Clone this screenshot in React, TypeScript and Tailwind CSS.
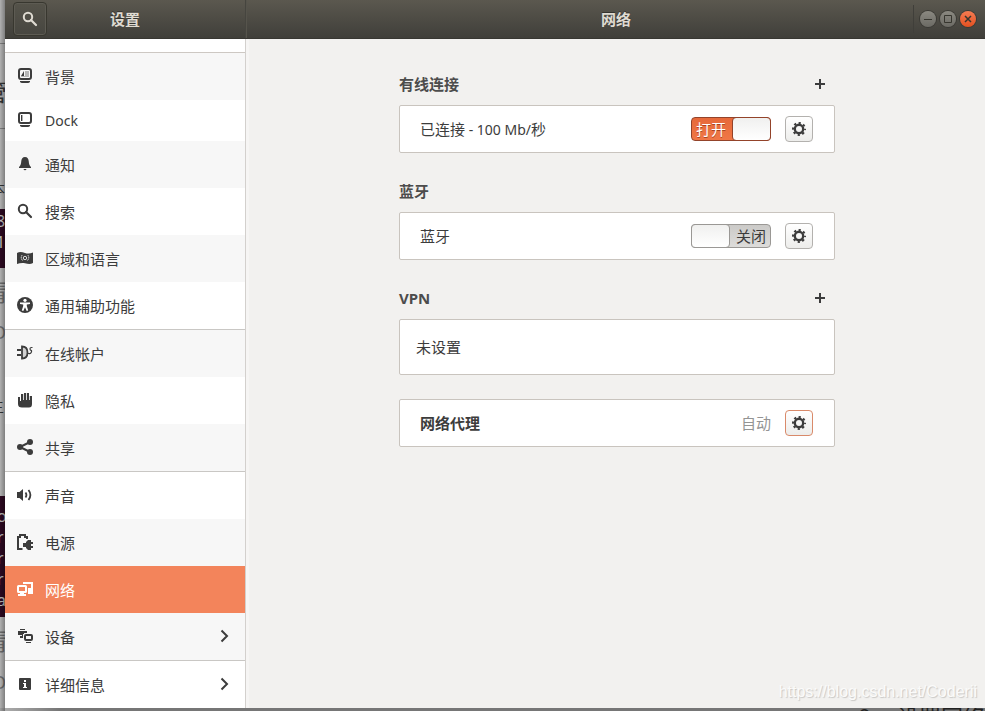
import React, { useState } from 'react';

type IconName =
  | 'background'
  | 'dock'
  | 'bell'
  | 'search'
  | 'region'
  | 'access'
  | 'accounts'
  | 'privacy'
  | 'share'
  | 'sound'
  | 'power'
  | 'network'
  | 'devices'
  | 'info';

interface NavItem {
  icon: IconName;
  label: string;
  className: string;
  active?: boolean;
  more?: boolean;
}

const navItems: NavItem[] = [
  { icon: 'background', label: '背景', className: 'h-[47px] bg-[#f7f7f7]' },
  { icon: 'dock', label: 'Dock', className: 'h-[41px] bg-white text-sm' },
  { icon: 'bell', label: '通知', className: 'h-[47px] bg-[#f7f7f7]' },
  { icon: 'search', label: '搜索', className: 'h-[47px] bg-white' },
  { icon: 'region', label: '区域和语言', className: 'h-[47px] bg-[#f7f7f7]' },
  { icon: 'access', label: '通用辅助功能', className: 'h-[47px] bg-white' },
  { icon: 'accounts', label: '在线帐户', className: 'h-12 border-t border-[#c9c7c4] bg-[#f7f7f7]' },
  { icon: 'privacy', label: '隐私', className: 'h-[47px] bg-white' },
  { icon: 'share', label: '共享', className: 'h-[47px] bg-[#f7f7f7]' },
  { icon: 'sound', label: '声音', className: 'h-12 border-t border-[#c9c7c4] bg-white' },
  { icon: 'power', label: '电源', className: 'h-[47px] bg-[#f7f7f7]' },
  { icon: 'network', label: '网络', className: 'h-[47px] bg-[#f3845b] text-white', active: true },
  { icon: 'devices', label: '设备', className: 'h-[47px] bg-[#f7f7f7]', more: true },
  { icon: 'info', label: '详细信息', className: 'h-12 border-t border-[#c9c7c4] bg-white', more: true },
];

const icons: Record<IconName, React.ReactNode> = {
  background: (
    <>
      <rect x="2" y="1" width="12" height="10" rx="2" fill="none" stroke="currentColor" strokeWidth="2" />
      <path d="M4 8h3V3Z" />
      <path d="M8 3h4v6H4V8h4Z" opacity=".35" />
      <path d="M3 13h10v1q-1 1-2 1H5q-1 0-2-1Z" />
    </>
  ),
  dock: (
    <>
      <rect x="2" y="1" width="12" height="10" rx="2" fill="none" stroke="currentColor" strokeWidth="2" />
      <path d="M4 3h1v6H4Z" />
      <path d="M5 3h1v6H5Z" opacity=".4" />
      <path d="M3 13h10v1q-1 1-2 1H5q-1 0-2-1Z" />
    </>
  ),
  bell: (
    <>
      <path d="M8 1C5.500 1 4.500 2.800 4.300 5C4 8.500 3.500 9.500 2 11v1h12v-1c-1.500-1.500-2-2.500-2.300-6C11.500 2.800 10.500 1 8 1Z" />
      <path d="M6.500 13h3q-.2 1.300-1.500 1.300T6.500 13Z" />
    </>
  ),
  search: (
    <>
      <circle cx="6" cy="6" r="4.200" fill="none" stroke="currentColor" strokeWidth="2" />
      <path d="m9 9 5 5" fill="none" stroke="currentColor" strokeWidth="2.200" strokeLinecap="round" />
    </>
  ),
  region: (
    <>
      <path d="M0 3c2.500-1.500 5-1 8 0s5.500.5 8-.5V13c-2.500 1.500-5 1-8 .3S2.500 13.300 0 14Z" />
      <g fill="none" stroke="white" strokeWidth=".8">
        <circle cx="8" cy="8" r="1.700" />
        <path d="M5.200 5Q3 8 6 11M10.800 5Q13 8 10 11" strokeDasharray="1.500 .5" />
      </g>
    </>
  ),
  access: (
    <>
      <circle cx="8" cy="8" r="8" />
      <g fill="white">
        <circle cx="8" cy="3.300" r="1.600" />
        <path d="M3 5.400h10v1.500L9.800 7.500V9l1.400 4.600-1.500.5L8 10.300 6.300 14.100l-1.500-.5L6.200 9V7.500L3 6.900Z" />
      </g>
    </>
  ),
  accounts: (
    <>
      <path d="M0 5h4M0 10h4" stroke="currentColor" strokeWidth="2" />
      <path d="M5 1.500q5.500 0 5.500 6t-5.500 6Z" fill="currentColor" fillOpacity=".2" stroke="currentColor" strokeWidth="1.800" />
      <path d="M15.500 2.500h-1q-1.500 0-1.500 1.300t1 1.500.3 2-2.300 1.200h-1" fill="none" stroke="currentColor" strokeWidth="1.200" />
    </>
  ),
  privacy: (
    <path d="M1 5h2v4h1V2h2.200v6h.8V1h2.200v7h.8V1h2v7h.8V4H15v8q0 3.500-3 3.500H5q-4 0-4-3.500Z" />
  ),
  share: (
    <>
      <path d="m13 3-10 5 10 5" fill="none" stroke="currentColor" strokeWidth="2" />
      <circle cx="3" cy="8" r="3" />
      <circle cx="13" cy="3" r="3" />
      <circle cx="13" cy="13" r="3" />
    </>
  ),
  sound: (
    <>
      <path d="M0 5h2.500L6 2v12L2.500 11H0Z" />
      <path d="M8.500 5.500q1.800 2.500 0 5M11.500 3q3.800 5 0 10" fill="none" stroke="currentColor" strokeWidth="1.800" />
    </>
  ),
  power: (
    <>
      <path d="M5.500 15H1V3h2V1h5v2h2v2" fill="none" stroke="currentColor" strokeWidth="2" />
      <path d="M12 6h2v2h2v2h-2v2h2v2h-2v2h-3l-2-2v-1H6v-4h3V8l2-2Z" />
    </>
  ),
  network: (
    <>
      <rect x="1" y="5" width="8" height="6" rx=".5" fill="none" stroke="currentColor" strokeWidth="2" />
      <path d="M3 12h4v1h2v2H1v-2h2Z" />
      <path d="M7 3V2h8v6h-4M11 10h4v2h-4" fill="none" stroke="currentColor" strokeWidth="2" />
    </>
  ),
  devices: (
    <>
      <path d="M3 1h5v1H3ZM1 3h9v2H7v1H6v4H3V8h2V7H1Z" />
      <rect x="8" y="7" width="7" height="5" rx="1" fill="none" stroke="currentColor" strokeWidth="2" />
      <path d="M9 14h5v1H9Z" />
    </>
  ),
  info: (
    <>
      <rect x="2" y="2" width="12" height="12" rx="1" />
      <path d="M7 4h2v2H7ZM6 7h3v4h1v1H6v-1h1V8H6Z" fill="white" />
    </>
  ),
};

const Icon: React.FC<{ name: IconName; className?: string }> = ({ name, className = '' }) => (
  <svg viewBox="0 0 16 16" className={`h-4 w-4 shrink-0 ${className}`} fill="currentColor" aria-hidden="true">
    {icons[name]}
  </svg>
);

const Sidebar: React.FC = () => (
  <nav className="w-[241px] shrink-0 border-r border-[#d3d0cd] bg-white">
    <div className="h-[14px] border-b border-[#cdc8c3]" />
    {navItems.map((item) => (
      <a
        key={item.label}
        href="#"
        aria-current={item.active ? 'page' : undefined}
        className={`flex items-center gap-3 px-3 ${item.className}`}
      >
        <Icon name={item.icon} className="mb-0.5" />
        <span className="flex-1">{item.label}</span>
        {item.more && (
          <svg
            viewBox="0 0 16 16"
            className="mb-0.5 h-4 w-4"
            fill="none"
            stroke="currentColor"
            strokeWidth="2"
            aria-hidden="true"
          >
            <path d="m4.500 2.500 5.500 5.500-5.500 5.500" />
          </svg>
        )}
      </a>
    ))}
  </nav>
);

const TitleBar: React.FC = () => (
  <header className="flex h-[39px] border-b border-[#383732] bg-linear-to-b from-[#5b584f] to-[#403f3a] font-bold text-[#dfdbd2] text-shadow-[0_-1px_0_#33322e]">
    <div className="grid w-[241px] shrink-0 grid-cols-[34px_1fr_34px] items-center border-r border-[#46453f] px-2">
      <button
        type="button"
        aria-label="搜索"
        className="flex h-[34px] w-[34px] items-center justify-center rounded border border-[#38372f] bg-linear-to-b from-[#55534a] to-[#474640] shadow-[inset_0_0_0_1px_#5d5b53]"
      >
        <Icon name="search" />
      </button>
      <h2 className="text-center">设置</h2>
    </div>
    <div className="grid flex-1 grid-cols-[1fr_auto_1fr] items-center border-l border-[#56544c]">
      <h1 className="col-start-2">网络</h1>
      <div className="flex h-7 items-center justify-end gap-1 justify-self-end border-l border-[#403f3a] pr-[9px] pl-[6px]">
        <WindowButton label="最小化" path="M4 8.500h8" />
        <WindowButton label="最大化" path="M4.500 4.500h7v7h-7Z" />
        <WindowButton label="关闭窗口" path="m5 5 6 6m0-6-6 6" close />
      </div>
    </div>
  </header>
);

const WindowButton: React.FC<{ label: string; path: string; close?: boolean }> = ({ label, path, close }) => (
  <button
    type="button"
    aria-label={label}
    className={`h-4 w-4 rounded-full shadow-[0_0_0_1px_#3b3a35] ${
      close ? 'bg-linear-to-b from-[#f57b51] to-[#e3501e]' : 'bg-linear-to-b from-[#8b8981] to-[#6b6a64]'
    }`}
  >
    <svg viewBox="0 0 16 16" className="h-4 w-4" fill="none" stroke="#37362f" strokeWidth={close ? 1.5 : 1} aria-hidden="true">
      <path d={path} />
    </svg>
  </button>
);

const GearButton: React.FC<{ label: string; focused?: boolean }> = ({ label, focused }) => (
  <button
    type="button"
    aria-label={label}
    className={`flex h-[26px] w-7 items-center justify-center rounded border bg-linear-to-b from-white to-[#ededeb] ${
      focused ? 'border-[#d98a6a]' : 'border-[#b3b1ae]'
    }`}
  >
    <svg viewBox="0 0 16 16" className="h-4 w-4" fill="none" stroke="currentColor" aria-hidden="true">
      <circle cx="8" cy="8" r="4.200" strokeWidth="2.400" />
      <circle cx="8" cy="8" r="6" strokeWidth="2" strokeDasharray="2.200 2.512" strokeDashoffset="1.100" />
    </svg>
  </button>
);

const AddButton: React.FC<{ label: string }> = ({ label }) => (
  <button type="button" aria-label={label} className="mr-[10px]">
    <svg viewBox="0 0 10 10" className="h-[10px] w-[10px]" aria-hidden="true">
      <path d="M4 0h2v4h4v2H6v4H4V6H0V4h4Z" fill="currentColor" />
    </svg>
  </button>
);

const Switch: React.FC<{ label: string; initial: boolean }> = ({ label, initial }) => {
  const [on, setOn] = useState(initial);

  return (
    <label
      className={`relative flex h-6 w-20 items-center rounded border ${
        on
          ? 'justify-start border-[#93432a] bg-linear-to-b from-[#e6693a] to-[#f07746] pl-1 text-white'
          : 'justify-end border-[#9a9895] bg-linear-to-b from-[#cbcac8] to-[#dddcda] pr-1'
      }`}
    >
      <input
        type="checkbox"
        role="switch"
        aria-label={label}
        checked={on}
        onChange={() => setOn(!on)}
        className="absolute inset-0 appearance-none opacity-0"
      />
      <span className={on ? 'text-shadow-[0_1px_0_#a94420]' : ''}>{on ? '打开' : '关闭'}</span>
      <span
        className={`absolute -inset-y-px w-[39px] rounded border bg-linear-to-b from-[#f0f0ef] to-white ${
          on ? '-right-px border-[#93432a]' : '-left-px border-[#9a9895]'
        }`}
      />
    </label>
  );
};

const Section: React.FC<{ title: string; add?: string; children: React.ReactNode }> = ({ title, add, children }) => (
  <section>
    <div className="mb-[7px] flex h-7 items-center justify-between">
      <h3 className="font-bold text-[#4c4c4c]">{title}</h3>
      {add && <AddButton label={add} />}
    </div>
    {children}
  </section>
);

const Row: React.FC<{ children: React.ReactNode }> = ({ children }) => (
  <div className="flex h-12 items-center gap-[14px] rounded-xs border border-[#c9c4be] bg-white pr-[21px] pl-5">
    {children}
  </div>
);

const NetworkPanel: React.FC = () => (
  <main className="flex-1 border-l-3 border-[#f6f5f4] bg-[#f2f1ef] pt-[31px]">
    <div className="mx-auto flex max-w-[436px] flex-col gap-6">
      <Section title="有线连接" add="添加有线连接">
        <Row>
          <span className="flex-1">
            已连接<span className="text-sm"> - 100 Mb/</span>秒
          </span>
          <Switch label="有线连接" initial />
          <GearButton label="有线连接选项" />
        </Row>
      </Section>

      <Section title="蓝牙">
        <Row>
          <span className="flex-1">蓝牙</span>
          <Switch label="蓝牙" initial={false} />
          <GearButton label="蓝牙选项" />
        </Row>
      </Section>

      <Section title="VPN" add="添加 VPN">
        <div className="flex h-14 items-center rounded-xs border border-[#c9c4be] bg-white px-4">未设置</div>
      </Section>

      <Row>
        <span className="flex-1 font-bold">网络代理</span>
        <span className="text-[#949494]">自动</span>
        <GearButton label="网络代理选项" focused />
      </Row>
    </div>
  </main>
);

// Slivers of the windows behind that show past the left and bottom edges
const Backdrop: React.FC = () => (
  <div className="absolute inset-0 overflow-hidden bg-[#c4c4c4] text-[#3a3a3a]" aria-hidden="true">
    <div className="absolute top-[43px] left-0 h-px w-[5px] bg-[#8a8a8a]" />
    <div className="absolute top-[128px] left-0 h-px w-[5px] bg-[#8a8a8a]" />
    <div className="absolute top-[76px] -left-[17px] text-2xl">管</div>
    <div className="absolute top-[178px] -left-[10px]">本</div>
    <div className="absolute top-[209px] left-0 h-[59px] w-[5px] bg-[#300a24] pt-0.5 text-base leading-[21px] text-[#d0cfcc]">
      <div className="-ml-1">8</div>
      <div className="-ml-1">1</div>
    </div>
    <div className="absolute top-[276px] -left-[17px] text-2xl text-[#777]">请</div>
    <div className="absolute top-[318px] -left-2 text-lg text-[#777]">O</div>
    <div className="absolute top-[396px] -left-[11px]">主</div>
    <div className="absolute top-[496px] left-0 h-[121px] w-[5px] bg-[#300a24] pt-[10px] text-base leading-[21px] text-[#d0cfcc]">
      {['o', 'r', 'r', 'r', 'a'].map((letter, i) => (
        <div key={i} className="-ml-[3px]">
          {letter}
        </div>
      ))}
    </div>
    <div className="absolute top-[625px] -left-[17px] text-2xl text-[#777]">请</div>
    <div className="absolute top-[668px] -left-2 text-lg text-[#777]">O</div>
    <div className="absolute inset-y-0 left-0 w-[5px] bg-linear-to-r from-black/10 to-black/35" />
    <div className="absolute inset-x-0 bottom-0 h-[3px] bg-linear-to-r from-black/10 to-black/40 to-[60px]" />
    <div className="absolute top-[700px] left-[858px] text-[22px] leading-6 text-[#222]">e</div>
    <div className="absolute top-[704px] left-[897px] text-[22px] leading-6 whitespace-nowrap text-[#222]">设置网络</div>
  </div>
);

const App: React.FC = () => {
  return (
    <div className="relative min-h-screen overflow-hidden pb-[3px] pl-[5px] font-['Noto_Sans','Noto_Sans_CJK_SC',sans-serif] text-[15px] leading-5 text-[#3c3c3c]">
      <Backdrop />
      <div className="relative">
        <TitleBar />
        <div className="flex">
          <Sidebar />
          <NetworkPanel />
        </div>
        <p className="absolute right-2 bottom-1 font-['Liberation_Sans',Arial,sans-serif] text-base leading-6 text-[#fbfbfa] text-shadow-[1px_1px_1px_#c8c7c5]">
          https://blog.csdn.net/Coderii
        </p>
      </div>
    </div>
  );
};

export default App;
